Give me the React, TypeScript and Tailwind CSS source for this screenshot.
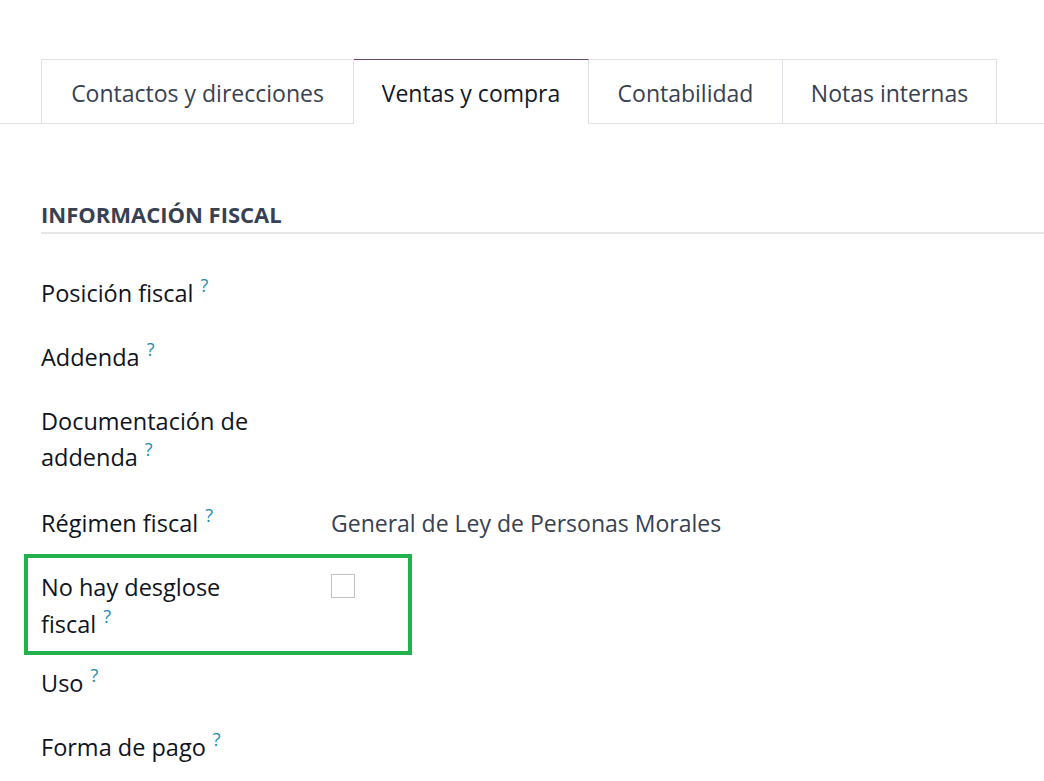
import React from "react";

const tabs = [
  { label: "Contactos y direcciones", w: "w-[313px]" },
  { label: "Ventas y compra", w: "w-[235px]", active: true },
  { label: "Contabilidad", w: "w-[194px]" },
  { label: "Notas internas", w: "w-[214px]" },
];

function Help() {
  return (
    <sup className="ml-[7px] text-[18px] font-normal text-[#1d8cb0] relative -top-[10px]">?</sup>
  );
}

function Row({
  label,
  children,
  className = "",
}: {
  label: React.ReactNode;
  children?: React.ReactNode;
  className?: string;
}) {
  return (
    <div className={`flex ${className}`}>
      <div className="w-[290px] text-[#0f1420] text-[23.5px] font-medium leading-[36px]">{label}</div>
      <div className="flex-1 text-[#374151] leading-[36px]">{children}</div>
    </div>
  );
}

export default function App() {
  return (
    <div
      className="w-[1044px] h-[781px] bg-white overflow-hidden text-[23px]"
      style={{ fontFamily: '"Open Sans", "Noto Sans", sans-serif' }}
    >
      {/* tabs */}
      <div className="pt-[59px] border-b border-[#dee2e6]">
        <div className="flex pl-[41px]">
          {tabs.map((t) => (
            <div
              key={t.label}
              className={`${t.w} h-[65px] -mb-px flex items-center justify-center pt-[3px] border border-l-0 first:border-l ${
                t.active
                  ? "border-[#dee2e6] border-t-[#6b4a62] border-b-white bg-white text-[#111827]"
                  : "border-[#dee2e6] text-[#374151]"
              }`}
            >
              <span>{t.label}</span>
            </div>
          ))}
        </div>
      </div>

      {/* section */}
      <div className="pl-[41px] pt-[76px]">
        <div className="text-[22px] font-bold text-[#374151] leading-[28px] pb-[4px] border-b-2 border-[#e6e6e6]">
          INFORMACIÓN FISCAL
        </div>

        <div className="mt-[41px] flex flex-col">
          <Row label={<>Posición fiscal<Help /></>} />
          <Row className="mt-[28px]" label={<>Addenda<Help /></>} />
          <Row
            className="mt-[28px]"
            label={
              <>
                Documentación de
                <br />
                addenda<Help />
              </>
            }
          />
          <Row className="mt-[30px]" label={<>Régimen fiscal<Help /></>}>
            <span>General de Ley de Personas Morales</span>
          </Row>

          <div className="-ml-[17px] mt-[13px] w-[388px] h-[101px] border-[4px] border-[#22b14c] pl-[13px] pt-[11px] flex">
            <div className="w-[290px] text-[#0f1420] text-[23.5px] font-medium leading-[37px]">
              No hay desglose
              <br />
              fiscal<Help />
            </div>
            <div className="pt-[5px]">
              <div className="w-[24px] h-[24px] border border-[#c2c2c2] bg-white" />
            </div>
          </div>

          <Row className="mt-[10px]" label={<>Uso<Help /></>} />
          <Row className="mt-[28px]" label={<>Forma de pago<Help /></>} />
        </div>
      </div>
    </div>
  );
}
